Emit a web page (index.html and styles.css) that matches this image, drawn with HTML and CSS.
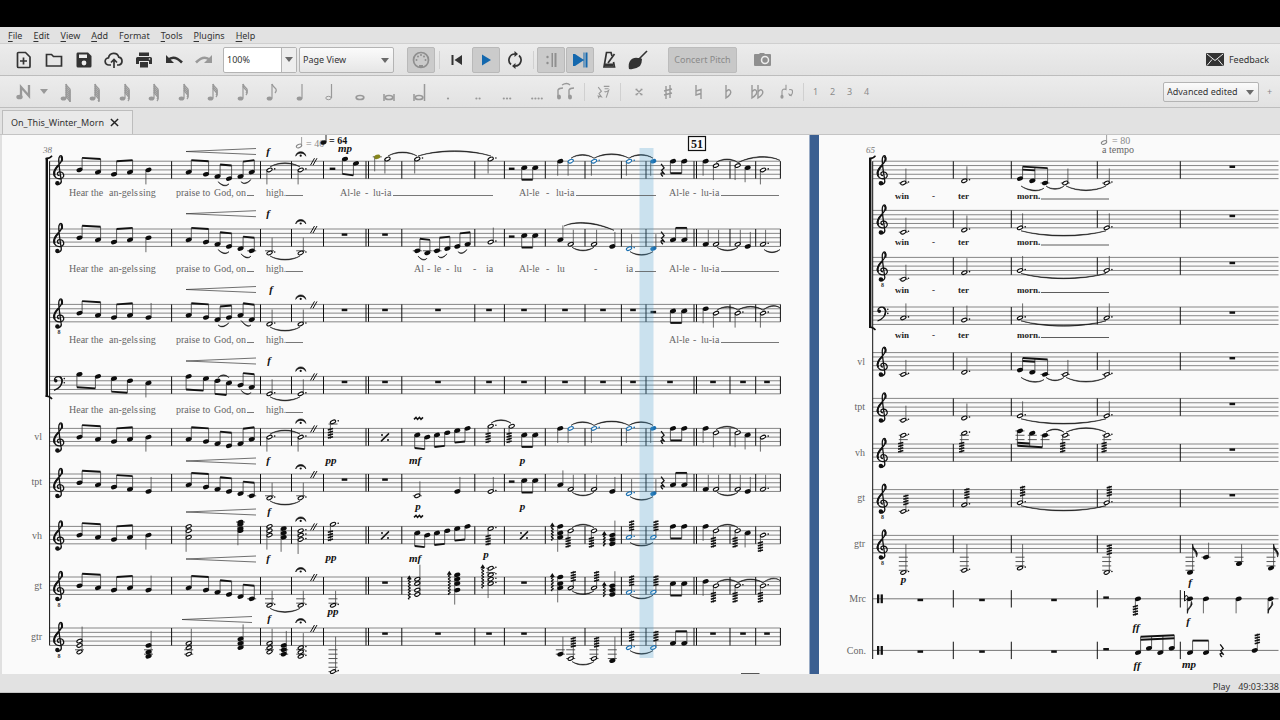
FILE: index.html
```html
<!DOCTYPE html>
<html lang="en">
<head>
<meta charset="utf-8">
<title>On_This_Winter_Morn</title>
<link rel="stylesheet" href="styles.css">
</head>
<body>
<div class="app">
<nav class="menubar">
  <button><u>F</u>ile</button><button><u>E</u>dit</button><button><u>V</u>iew</button><button><u>A</u>dd</button><button>F<u>o</u>rmat</button><button><u>T</u>ools</button><button><u>P</u>lugins</button><button><u>H</u>elp</button>
</nav>
<div class="toolbar">
  <span class="grip"></span>
  <div class="files">
    <button aria-label="New"><svg viewBox="0 0 20 20"><path d="M4.500 2.500h7l4.500 4.500v9.500q0 1-1 1h-10.500q-1 0-1-1v-13q0-1 1-1zM9.500 7.500v7M6 11h7" class="ln"/></svg></button>
    <button aria-label="Open"><svg viewBox="0 0 20 20"><path d="M2.500 16V4.500h5l2 2h8V16z" class="ln"/></svg></button>
    <button aria-label="Save"><svg viewBox="0 0 20 20"><path d="M3.500 2.500h10.500l3.500 3.500v10q0 1.500-1.500 1.500h-12q-1.500 0-1.500-1.500v-12q0-1.500 1-1.500z"/><path d="M5 4.500h8v3.500H5z" fill="#eee"/><circle cx="10" cy="13" r="2.400" fill="#eee"/></svg></button>
    <button aria-label="Save online"><svg viewBox="0 0 20 20"><path d="M7 15H5a3.600 3.600 0 0 1-.500-7.200 5.300 5.300 0 0 1 10.300-.600A4 4 0 0 1 15 15h-2M10 18v-8M7 12.500l3-3 3 3" class="ln"/></svg></button>
    <button aria-label="Print"><svg viewBox="0 0 20 20"><path d="M5 2.500h10v3.500H5zM3.500 7h13q1.500 0 1.500 1.500v5.500h-3v-3H5v3H2V8.500Q2 7 3.500 7zM6 12h8v5.500H6z"/><circle cx="15.500" cy="9" r=".8" fill="#eee"/></svg></button>
    <button aria-label="Undo"><svg viewBox="0 0 20 20"><path d="M4 10q6-5.500 14 2.500" class="ln thick"/><path d="M2 5v8h8z"/></svg></button>
    <button aria-label="Redo" class="off"><svg viewBox="0 0 20 20"><path d="M16 10q-6-5.500-14 2.500" class="ln thick"/><path d="M18 5v8h-8z"/></svg></button>
  </div>
  <div class="zoombox"><input type="text" value="100%" aria-label="Zoom"><button aria-label="Zoom levels"><i class="caret"></i></button></div>
  <div class="combo view"><select aria-label="View mode"><option>Page View</option></select><i class="caret"></i></div>
  <span class="grip mid"></span>
  <button class="tool on off" aria-label="MIDI input"><svg viewBox="0 0 20 20"><circle cx="10" cy="10" r="7.500" class="ln"/><path d="M8 17v-2h4v2z"/><circle cx="5.500" cy="10" r="1"/><circle cx="14.500" cy="10" r="1"/><circle cx="7" cy="6.500" r="1"/><circle cx="13" cy="6.500" r="1"/><circle cx="10" cy="5" r="1"/></svg></button>
  <span class="sep"></span>
  <button class="tool" aria-label="Rewind"><svg viewBox="0 0 20 20"><path d="M4.500 5h2v10h-2zM15 5v10l-7.500-5z"/></svg></button>
  <button class="tool on blue" aria-label="Play"><svg viewBox="0 0 20 20"><path d="M6 4.500v11l9-5.500z"/></svg></button>
  <button class="tool" aria-label="Loop"><svg viewBox="0 0 20 20"><path d="M6 14.500A6 6 0 0 1 10 4M14 5.500a6 6 0 0 1-4 10.500" class="ln"/><path d="M9.500 1v6l3.500-3zM10.500 13v6L7 16z"/></svg></button>
  <span class="sep"></span>
  <button class="tool on off" aria-label="Play repeats"><svg viewBox="0 0 20 20"><path d="M10.500 3h1.500v14h-1.500zM13.500 3h2v14h-2z"/><circle cx="6.500" cy="7" r="1.200"/><circle cx="6.500" cy="13" r="1.200"/></svg></button>
  <button class="tool on blue" aria-label="Pan score"><svg viewBox="0 0 20 20"><path d="M3 4h2v12H3zM13.500 2.500h1v15h-1zM15.500 2.500h2v15h-2zM5 4l9 6-9 6z"/></svg></button>
  <button class="tool" aria-label="Metronome"><svg viewBox="0 0 20 20"><path d="M13 6l-1-3.500H7.500L5 17h10.500l-1-5" class="ln"/><path d="M5.500 13.500h9v3h-9z"/><path d="M9 13l6.500-9" class="ln"/></svg></button>
  <button class="tool" aria-label="Image capture"><svg viewBox="0 0 20 20"><path d="M1 19q-1-5 1-8 3-4 8-3 3-.500 4 1 0 4-2 7Q7 20 1 19z"/><path d="M9 11L19 1" stroke="currentColor" stroke-width="1.600"/></svg></button>
  <span class="grip"></span>
  <button class="pitch">Concert Pitch</button>
  <span class="grip"></span>
  <button class="tool off" aria-label="Screenshot"><svg viewBox="0 0 20 20"><path d="M2 4h4l1-1h4l1 1h5q1 0 1 1v10q0 1-1 1H2q-1 0-1-1V5q0-1 1-1z"/><circle cx="12" cy="10" r="3.500" fill="none" stroke="#eee" stroke-width="1.500"/></svg></button>
  <button class="feedback"><svg viewBox="0 0 20 14"><rect x="1" y="0" width="18" height="13" rx="1"/><path d="M2 1l8 6.500L18 1M2 12.500l5-6M18 12.500l-5-6" fill="none" stroke="#eee"/></svg>Feedback</button>
</div>
<div class="toolbar">
  <span class="grip"></span>
  <button class="entry" aria-label="Note input"><svg viewBox="0 0 20 20"><ellipse cx="4.500" cy="15" rx="3.200" ry="2.300"/><path d="M6 15V5l8 9V3" fill="none" stroke="currentColor" stroke-width="2.300"/></svg></button>
  <button class="drop" aria-label="Input modes"><i class="caret"></i></button>
  <div class="durations" id="durations"></div>
  <span class="sep"></span>
  <button class="rest" aria-label="Rest"><svg viewBox="0 0 20 20"><path d="M4 4l4 5-3 3 3 4-4-1 1 3M11 3h7M12 6h5M12 9q1 2 5-1l-3 9" class="ln"/></svg></button>
  <span class="sep"></span>
  <div class="accidentals" id="accidentals"></div>
  <button class="flip" aria-label="Flip"><svg viewBox="0 0 20 20"><ellipse cx="5" cy="16" rx="2" ry="2.500"/><path d="M5 16V9q1-4 5-2V1M10 7V2M14 7q5-1 4 4-1 4-4 3M13 12l4 3" class="ln"/></svg></button>
  <span class="sep"></span>
  <div class="voices"><button>1</button><button>2</button><button>3</button><button>4</button></div>
  <span class="grip"></span>
  <div class="combo workspace"><select aria-label="Workspace"><option>Advanced edited</option></select><i class="caret"></i></div>
  <button class="plus" aria-label="New workspace">+</button>
</div>
<div class="tabs"><div class="tab">On_This_Winter_Morn<button aria-label="Close"><svg viewBox="0 0 10 10"><path d="M1 1l8 8M9 1L1 9" stroke="#222" stroke-width="1.600"/></svg></button></div></div>
<main class="viewer"><svg id="score" class="score" width="1280" height="539" viewBox="0 135 1280 539" role="img" aria-label="Score of On This Winter Morn"></svg></main>
<footer class="status"><span>Play</span><span>49:03:338</span></footer>
</div>
<script src="score.js"></script>
</body>
</html>
```
FILE: styles.css
```css
* { box-sizing: border-box; }
body {
  margin: 0;
  background: #000;
  font: 9px "Noto Sans", "Open Sans", sans-serif;
  color: #333;
}
.app {
  height: 100vh;
  padding: 27px 0;
  display: flex;
  flex-direction: column;
  overflow: hidden;
}
button {
  border: 0;
  padding: 0;
  background: none;
  font: inherit;
  color: inherit;
  flex: none;
  display: flex;
  align-items: center;
  justify-content: center;
}
svg { fill: currentColor; }
.ln { fill: none; stroke: currentColor; stroke-width: 1.7; }
.thick { stroke-width: 2.6; }
.menubar {
  display: flex;
  gap: 11px;
  padding-left: 8px;
  height: 17px;
  background: #e2e2e2;
  border-bottom: 1px solid #cfcfcf;
  flex: none;
}
.menubar button { display: block; line-height: 18px; }
u { text-underline-offset: 2px; }
.toolbar {
  display: flex;
  align-items: center;
  height: 32px;
  flex: none;
  background: linear-gradient(#ececec, #e2e2e2);
  border-bottom: 1px solid #bdbdbd;
  overflow: hidden;
}
.toolbar svg { width: 20px; height: 20px; }
.grip {
  width: 3px;
  height: 14px;
  margin: 0 3px;
  flex: none;
  background: radial-gradient(circle, #bbb 30%, transparent 50%) 0 0 / 2px 2px;
}
.grip.mid { margin: 0 3px 0 7px; }
.sep { width: 1px; height: 18px; margin: 0 3px; background: #d0d0d0; flex: none; }
.files { display: flex; margin-right: 4px; }
.files button { width: 30px; }
.off { color: #999; }
.zoombox {
  display: flex;
  width: 74px;
  height: 26px;
  margin-right: 2px;
  border: 1px solid #b4b4b4;
  border-radius: 2px;
  background: #fff;
  flex: none;
}
.zoombox input {
  flex: 1;
  min-width: 0;
  border: 0;
  padding: 0 3px;
  background: none;
  font: inherit;
  color: inherit;
}
.zoombox button { width: 15px; background: #eee; border-left: 1px solid #b4b4b4; }
.caret {
  border: 4px solid transparent;
  border-top: 5px solid #6a6a6a;
  border-bottom: 0;
}
.combo { position: relative; flex: none; }
.combo select {
  appearance: none;
  width: 100%;
  height: 100%;
  border: 1px solid #b4b4b4;
  border-radius: 2px;
  padding: 0 3px;
  background: linear-gradient(#fbfbfb, #e6e6e6);
  font: inherit;
  color: inherit;
}
.combo .caret { position: absolute; right: 5px; top: 50%; margin-top: -2px; }
.view { width: 95px; height: 26px; }
.tool { width: 28px; height: 26px; margin: 0 1px 0 0; border-radius: 2px; }
.tool.on { background: #cbcbcb; border: 1px solid #b9b9b9; }
.off.tool { color: #8f8f8f; }
.tool.blue { color: #1468ae; }
.pitch {
  width: 69px;
  height: 26px;
  margin: 0 3px 0 6px;
  border-radius: 2px;
  background: #c8c8c8;
  border: 1px solid #bcbcbc;
  color: #8a8a8a;
}
.feedback { margin: 0 11px 0 auto; gap: 4px; }
.feedback svg { height: 14px; }
.entry { width: 24px; color: #999; margin-left: 4px; }
.drop { width: 13px; }
.drop .caret { border-top-color: #999; }
.durations {
  display: grid;
  grid-template-columns: repeat(18, 1fr);
  width: 531px;
  flex: none;
  color: #999;
}
.accidentals {
  display: grid;
  grid-template-columns: repeat(5, 1fr);
  width: 148px;
  flex: none;
  color: #999;
}
.rest { width: 29px; color: #999; }
.rest svg, .flip svg { width: 16px; }
.rest .ln, .flip .ln, .accidentals .ln { stroke-width: 1.4; }
.flip { width: 28px; color: #999; }
.voices { display: flex; color: #8c8c8c; }
.voices button { width: 17px; }
.workspace { width: 96px; height: 20px; margin-left: auto; }
.plus { width: 21px; color: #888; }
.tabs { display: flex; height: 26px; padding: 2px 0 0 2px; background: #e2e2e2; flex: none; }
.tab {
  display: flex;
  align-items: center;
  gap: 6px;
  width: 131px;
  padding-left: 8px;
  border: 1px solid #bdbdbd;
  border-bottom: 0;
  background: #e9e9e9;
}
.tab svg { width: 9px; height: 9px; display: block; }
.viewer {
  flex: 1;
  min-height: 0;
  overflow: hidden;
  background: #fafafa;
  border-top: 1px solid #c4c4c4;
}
.score { display: block; font-family: "Liberation Serif", serif; }
.lyric, .tag { font-size: 10px; fill: #666; }
.tag { text-anchor: end; }
.strong { fill: #222; font-weight: bold; font-size: 9px; }
.dyn { font-size: 11px; font-weight: bold; font-style: italic; text-anchor: middle; fill: #111; }
.bar { font-size: 9px; font-style: italic; fill: #777; }
.tempo { font-size: 10px; fill: #888; }
.mark { font-size: 10px; font-weight: bold; fill: #111; }
.boxed { font-size: 12px; }
.small { font-size: 6px; font-weight: bold; text-anchor: middle; }
.status {
  display: flex;
  justify-content: flex-end;
  gap: 8px;
  height: 19px;
  line-height: 25px;
  padding-right: 1px;
  background: #e2e2e2;
  border-bottom: 1px solid #c4c4c4;
  flex: none;
}
```
FILE: score.js
```js
const HALF = 2.18;
const BLUE = '#1a6fb0';
const out = [];
const f = n => Math.round(n * 100) / 100;
const line = (x1, y1, x2, y2, w = 0.7, c = '#111') =>
  out.push(`<line x1="${f(x1)}" y1="${f(y1)}" x2="${f(x2)}" y2="${f(y2)}" stroke="${c}" stroke-width="${w}"/>`);
const path = (d, w = 1, c = '#111', fill = 'none') =>
  out.push(`<path d="${d}" fill="${fill}" stroke="${c}" stroke-width="${w}"/>`);
const rect = (x, y, w, h, c = '#111') => out.push(`<rect x="${f(x)}" y="${f(y)}" width="${f(w)}" height="${f(h)}" fill="${c}"/>`);
const dot = (x, y, r = 0.8, c = '#111') => out.push(`<circle cx="${f(x)}" cy="${f(y)}" r="${r}" fill="${c}"/>`);
const text = (x, y, s, cls) => out.push(`<text x="${x}" y="${y}" class="${cls}">${s}</text>`);

function head(x, y, open, c) {
  out.push(open
    ? `<ellipse cx="${x}" cy="${f(y)}" rx="2.8" ry="1.6" fill="#fafafa" stroke="${c}" stroke-width="1.100" transform="rotate(-24 ${x} ${f(y)})"/>`
    : `<ellipse cx="${x}" cy="${f(y)}" rx="3.1" ry="2.1" fill="${c}" transform="rotate(-20 ${x} ${f(y)})"/>`);
}
function ledgers(x, ps, top) {
  for (let p = 10; p <= Math.max(...ps); p += 2) line(x - 4.5, top + p * HALF, x + 4.5, top + p * HALF, 0.7);
  for (let p = -2; p >= Math.min(...ps); p -= 2) line(x - 4.5, top + p * HALF, x + 4.5, top + p * HALF, 0.7);
}
function note(kind, top, [xs, pstr, dir, flags = '']) {
  const x = +xs, ps = pstr.split(',').map(Number), ys = ps.map(p => top + p * HALF);
  const c = flags.includes('B') ? BLUE : flags.includes('O') ? '#85851c' : '#0c0c0c';
  const trem = flags.includes('t'), len = trem ? 17 : 14.5, mid = top + 4 * HALF;
  const hi = Math.min(...ys), lo = Math.max(...ys);
  ledgers(x, ps, top);
  const up = dir === 'u', sx = up ? x + 2.6 : x - 2.6;
  const single = flags.includes('1');
  const end = up ? (single ? hi - len : Math.min(hi - len, mid)) : (single ? lo + len : Math.max(lo + len, mid));
  line(sx, up ? lo : hi, sx, end, 0.8, '#444');
  ys.forEach(y => {
    head(x, y, kind === 'h' || kind === 'H', c);
    if (kind === 'H') dot(x + 5.2, y - 1, 0.8, c);
  });
  if (trem) for (let i = 0; i < 4; i++) {
    const y = up ? end + 1.5 + i * 2.7 : end - 1.5 - i * 2.7;
    path(`M${f(sx - 2.6)} ${f(y + 0.7)}L${f(sx + 2.6)} ${f(y - 0.7)}`, 1.6);
  }
  if (flags.includes('a')) {
    let d = `M${x - 8} ${f(hi - 1)}`;
    for (let y = hi - 1; y < lo + 2; y += 3) d += 'q2 .75 0 1.500q-2 .75 0 1.500';
    path(d, 1.1);
    path(`M${x - 10.5} ${f(hi)}l2.500-4 2.500 4z`, 0, 'none', '#111');
  }
  if (kind === 'e') up
    ? path(`M${sx} ${f(end)}q0 3 3 6t1 7q0-5-4-8z`, 0.6, '#111', '#111')
    : path(`M${sx} ${f(end)}q0-3 3-6t1-6q0 5-4 8z`, 0.6, '#111', '#111');
}
function beam(top, args) {
  const up = args[0] === 'u', levels = +args[1];
  const ns = args.slice(2).map(s => s.split(':').map(Number));
  const pts = ns.map(([x, p]) => ({ x, p, sx: up ? x + 2.6 : x - 2.6, y: top + p * HALF }));
  const a = pts[0], z = pts[pts.length - 1], sign = up ? -1 : 1;
  const d = Math.max(-1.5, Math.min(1.5, (z.y - a.y) * 0.5));
  const t = q => (q.sx - a.sx) / (z.sx - a.sx) * d;
  const base = up ? Math.min(...pts.map(q => q.y - 12 - t(q))) : Math.max(...pts.map(q => q.y + 12 - t(q)));
  for (const q of pts) {
    ledgers(q.x, [q.p], top);
    line(q.sx, q.y, q.sx, base + t(q), 0.8, '#333');
    head(q.x, q.y, false, '#0c0c0c');
  }
  for (let l = 0; l < levels; l++) {
    const o = -sign * l * 3, last = l && pts.length === 3 ? pts[1] : z;
    path(`M${a.sx} ${f(base + o)}L${last.sx} ${f(base + t(last) + o)}`, 1.9);
  }
}
function slur(top, [x1, p1, x2, p2, dir]) {
  const s = dir === 'u' ? -1 : 1, a = +x1, b = +x2;
  const y1 = top + p1 * HALF + s * 3, y2 = top + p2 * HALF + s * 3;
  const h = s * Math.min(7, 3 + (b - a) * 0.08), q = (b - a) * 0.28;
  path(`M${a} ${f(y1)}C${f(a + q)} ${f(y1 + h)} ${f(b - q)} ${f(y2 + h)} ${b} ${f(y2)}C${f(b - q)} ${f(y2 + h - s)} ${f(a + q)} ${f(y1 + h - s)} ${a} ${f(y1)}z`, 0.5, '#111', '#111');
}
function quarterRest(x, y) {
  path(`M${x - 1.5} ${f(y - 6)}l3 4-2.500 2.500 3 4M${x + 2} ${f(y + 4)}q-4-2-3.500 0t2 2.500`, 1.3);
}
function play(top, src) {
  for (const item of src.split(';')) {
    const a = item.trim().split(/\s+/), k = a.shift(), x = +a[0];
    if ('qhHe'.includes(k) && k) note(k, top, a);
    else if (k === 'b') beam(top, a);
    else if (k === 's') slur(top, a);
    else if (k === 'w') a.forEach(v => rect(v - 2.8, top + 4.4, 5.6, 2.4));
    else if (k === 'R') rect(x - 2.8, top + 6.4, 5.6, 2.4);
    else if (k === 'z') quarterRest(x, top + 8.7);
    else if (k === '%') {
      path(`M${x - 4} ${top + 13}L${x + 4} ${top + 5}`, 1.5);
      dot(x - 3, top + 6.5, 1); dot(x + 3, top + 11.5, 1);
    } else if (k === 'm') path(`M${x - 4} ${top - 9}l2-2 1.500 2 2-2 1.500 2 2-2`, 1.5);
  }
}
function treble(x, top, octave) {
  const y = top + 13;
  out.push(`<g transform="translate(${x} ${f(y)})" fill="none" stroke="#111" stroke-width="1.300"><path d="M.5 1.500C-2 1.500-2.500-1.800 0-2.300C3.500-3 5.300 0 4.600 2.200C3.800 4.600-.5 5.300-3 3.500C-6.500.8-5.500-4-2-7.500C1-10.500 3.600-13 3.200-16.500C3-19 1.200-19.500 0-16.500C-1-13.500 .3-7 2.200 6C3 9.500-1 11.500-2.500 9"/><path d="M-4.300 1.500C-6-2-3.500-6 0-9.500M2.800-13C3.300-15 3-17 2-18" stroke-width="2"/><circle cx="-1.600" cy="9" r="1.600" fill="#111"/></g>`);
  if (octave) text(x, f(top + 29.500), '8', 'small');
}
function bass(x, t) {
  dot(x - 3.2, t + 4.3, 1.7);
  path(`M${x - 4.6} ${t + 4}C${x - 4.5} ${t - 1} ${x + 3.5} ${t - 1.5} ${x + 3.2} ${t + 4.5}C${x + 3} ${t + 9.5} ${x - 1} ${t + 12.5} ${x - 5} ${t + 14}`, 1.3);
  path(`M${x + 1} ${t + .5}q3.500 3 1 8`, 1.4);
  dot(x + 5.3, t + 2.2); dot(x + 5.3, t + 6.4);
}
function staff(x1, x2, top, bars) {
  for (let i = 0; i < 5; i++) line(x1, top + i * 2 * HALF, x2, top + i * 2 * HALF, 0.7, '#555');
  bars.forEach(b => line(b, top, b, top + 8 * HALF, 1));
}
function bracket(x, y1, y2) {
  rect(x, y1, 2.4, y2 - y1);
  path(`M${x} ${y1 + 1}q4 0 6.500-3M${x} ${y2 - 1}q4 0 6.500 3`, 1.4);
}
function hairpin(x, y) { line(x, y, x + 70, y - 3, 0.7, '#333'); line(x, y, x + 70, y + 3, 0.7, '#333'); }

/* ---- page 1 ---- */
rect(0, 134, 2, 541, '#e0e0e0');
const bars1 = [171.6, 260.5, 291.5, 323.5, 366, 368.5, 401.8, 474.8, 504.4, 545.3, 585, 621.4, 646, 694, 696.5, 730, 755.7, 780.4];
const openA = 'b u 1 79.5:4 98:5;b u 1 114:6 130:5;';
const melody = 'b u 1 188.7:5 206:6;b u 1 217.5:7 229:8;';
const down6 = 'b u 1 240.5:9 251.7:10;';
const low = 'H 269.5 11 u;H 300.7 11 u;s 270 11 300 11 d;';
const run = 'b d 1 417.3:3 427.3:4;b d 1 437:3 447.3:2;b d 1 457.3:1 467.6:0;m 418;';
const high = 'q 560.3 0 d;h 570.7 0 d B;H 594 0 d B;H 629 0 d B;q 653.3 0 d B;z 662.6;b d 1 673:0 684.3:0;q 705.7 0 d;h 716 2 d;h 737.7 2 d;q 747.7 3 d;H 763 4 d;s 571 0 594 0 u;s 594 0 629 0 u;s 629 0 653 0 u;s 716 2 738 2 u;';
const alto = 'q 560.3 5 u;h 570.7 7 u;h 594 7 u;q 612.3 8 u;H 629 9 u B;q 653.3 9 u B;z 662.6;b u 1 673:5 684.3:5;q 705.7 7 u;h 716 7 u;h 737.7 7 u;q 747.7 8 u;H 763 7 u;s 572 7 594 7 d;s 630 9 653 9 d;s 717 7 738 7 d;';
const p1 = [
  [161.2, '', openA + 'q 148.5 4 d;' + melody + 'b u 1 240.5:7 251.7:5;s 218 8 229 9 d;s 241 8 251 7 d;H 269.5 4 d;H 300.7 4 d;s 270 4 300 4 u;R 332.5;b d 1 345:-1 356:1;q 377.3 -2 d O;h 387.5 -1 d;H 417.3 -1 d;H 490.7 -1 d;s 388 -1 417 -1 u;s 418 -1 491 -1 u;R 511.7;b d 1 524.3:3 535.3:3;' + high + 's 738 2 780 1 u'],
  [229, '', openA + 'q 148.5 4 d;' + melody + down6 + 's 218 8 229 9 d;s 241 10 251 11 d;' + low + 'w 344.500 385;b u 1 417.3:10 427.3:11;b u 1 437:10 447.3:9;b u 1 457.3:8 467.6:7;s 418 11 427 12 d;s 438 11 447 10 d;s 458 9 467 8 d;H 490.7 6 u;R 511.7;b d 1 524.3:3 535.3:3;' + alto + 's 564 0 614 2 u;s 764 8 780 8 d'],
  [304.4, '8', openA + 'q 148.5 6 u;b u 1 188.7:5 206:6;b u 1 217.5:7 229:6;b u 1 240.5:5 251.7:7;s 218 8 229 7 d;s 241 6 251 8 d;H 269.5 9 u;H 300.7 9 u;s 270 9 300 9 d;w 344.5 385 438 489 524 565 603 633;R 653.3;b d 1 673:3 684.3:3;q 705.7 2 d;h 716 4 d;H 737.7 4 d;H 763 4 d;s 717 4 738 4 u;s 738 4 763 4 u;s 763 4 780 3 u'],
  [376.4, 'F', 'b d 1 79.5:-1 98:0;b d 1 114:1 130:2;q 148.5 3 d;b d 1 188.7:0 206:1;b d 1 217.5:2 229:3;b u 1 240.5:4 251.7:5;s 218 2 229 2 u;s 241 5 251 6 d;H 269.5 8 u;H 300.7 8 u;s 270 8 300 8 d;w 344.5 385 438 489 524 565 603 633 670 713 743 767'],
  [428.4, '', openA + 'q 148.5 4 d;' + melody + 'b u 1 240.5:7 251.7:5;H 269.5 4 d;H 300.7 4 d;s 270 4 300 4 u;H 333 -3 d t;% 385;' + run + 'H 490.7 -1 d t;h 511.7 -1 d t;s 491 -1 511 -1 u;b d 1 524.3:3 535.3:3;' + high],
  [474, '', openA.replace('114:6 130:5', '114:6 130:7') + 'q 148.5 8 u;' + melody + down6 + low + 'w 344.5 385;h 417.3 10 u;q 457.3 8 u;H 490.7 8 u;R 511.7;b d 1 524.3:3 535.3:3;' + alto],
  [526.4, '', openA + 'q 148.5 4 d;h 188.7 0,2,5 d;q 240.5 -2,-1,1,2 d;h 269.5 0,2,4 d;q 283.7 1,3,5 d;H 300.7 2,4,6 d;H 333 -1 d t;% 385;' + run + 'H 490.7 1 d t;% 524;q 560.3 0,3,5 d a;h 570.7 2 d t;h 594 2 d t;q 612.3 4,6,8 u a;H 629 5 u Bt;h 653.3 5 u Bt;b d 1 673:0 684.3:0;q 705.7 0 d;h 716 2 d t;h 737.7 2 d t;q 747.7 3 d;H 763 4 d t;s 572 2 594 2 u;s 630 6 653 6 d;s 717 2 738 2 u'],
  [577, '8', openA + 'q 148.5 6 u;' + melody + down6 + 'H 269.5 13 u 1;H 300.7 13 u 1;s 270 13 300 13 d;H 333 13 u 1;w 385;h 417.3 1,3,6,8 u a;q 457.3 -1,1,3,6 d a;H 490.7 -4,-1,1,3 d a;w 524;q 560.3 0,3,5 d a;h 570.7 5 u t;h 594 5 u t;q 612.3 4,6,8 u a;H 629 7 u Bt;h 653.3 7 u Bt;b d 1 673:3 684.3:3;q 705.7 2 d;h 716 4 d t;H 737.7 4 d t;H 763 4 d t;s 572 5 594 5 d;s 630 7 653 7 d;s 717 4 738 4 u;s 738 4 763 4 u;s 763 4 780 3 u'],
  [628, '8', 'h 79.5 6,8,11 u;q 148.5 8,11,13 u;h 188.7 7,9,12 u;q 240.5 5,7,9 u;h 269.5 7,9,11 u;q 283.7 8,10,12 u;H 300.7 9,11,13 u;H 333 20 u;w 385 438 489 524;q 560.3 12 u;h 570.7 14 u t;h 594 14 u t;q 612.3 15 u;H 629 9 u Bt;h 653.3 9 u Bt;b u 1 673:7 684.3:7;w 713 743 767;s 572 14 594 14 d;s 630 9 653 9 d'],
];
for (const [top, clef, src] of p1) {
  staff(49.6, 780.4, top, bars1);
  clef === 'F' ? bass(59, top) : treble(59, top, clef);
  play(top, src);
  path(`M295.700 ${f(top - 5)}C296 ${f(top - 11)} 305.500 ${f(top - 11)} 305.800 ${f(top - 5)}C304 ${f(top - 9)} 297.500 ${f(top - 9)} 295.700 ${f(top - 5)}z`, 0.6, '#111', '#111');
  dot(300.7, top - 5.5, 1.1);
  line(310.5, top + 4, 314.5, top - 3, 1); line(313, top + 4, 317, top - 3, 1);
}
line(49.6, 161.2, 49.6, 645.4, 1);
bracket(45.6, 157.7, 397);
[[186, 151.5], [186, 213.7], [186, 289.5], [186, 361], [186, 461], [186, 512], [186, 559], [182, 619.5]].forEach(h => hairpin(...h));

/* ---- page 2 ---- */
rect(809.5, 134, 9.5, 541, '#3b5f91');
const bars2 = [953.3, 1011.3, 1097.3, 1180.3];
const vocal = 'H 903.3 10 u 1;H 964.3 9 u 1;b u 2 1020:8 1032.3:9 1045:10;h 1065.3 10 u 1;H 1106.7 10 u 1;w 1232.3;s 1021 10 1044 11 d;s 1046 10 1064 10 d;s 1066 10 1106 10 d';
const hold = 'H 903.3 10 u 1;H 964.3 9 u 1;H 1020 8 u;H 1106.7 8 u;w 1232.3;s 1021 8 1106 8 d';
const p2 = [
  [161.2, '', vocal], [210.4, '', hold],
  [257.4, '8', 'H 903.3 10 u 1;H 964.3 7 u;H 1020 6 u;H 1106.7 6 u;w 1232.3;s 1021 6 1106 6 d'],
  [307, 'F', 'H 903.3 5 u;H 964.3 6 u;H 1020 5 u;H 1106.7 5 u;w 1232.3;s 1021 5 1106 5 d'],
  [352.6, '', vocal], [398.4, '', hold],
  [444, '', 'H 903.3 -4 d t;H 964.3 -5 d t;b d 2 1020:-6 1032.3:-5 1045:-4;h 1065.3 -4 d t;H 1106.7 -4 d t;w 1232.3;s 1046 -4 1064 -4 u;s 1066 -4 1106 -4 u'],
  [489.6, '8', 'H 903.3 10 u t1;H 964.3 7 u t;H 1020 6 u t;H 1106.7 6 u t;w 1232.3;s 1021 6 1106 6 d'],
  [535.4, '8', 'H 903.3 17 u;H 964.3 16 u;H 1020 15 u;H 1106.7 17 u t;e 1190 17 u;q 1206 10 u 1;q 1239 13 u;e 1271 15 u'],
];
for (const [top, clef, src] of p2) {
  staff(872.7, 1278.5, top, bars2);
  clef === 'F' ? bass(882.5, top) : treble(882.5, top, clef);
  play(top, src);
}
for (const y of [598.8, 650.4]) {
  line(872.7, y, 1278.5, y, 0.8, '#555');
  bars2.forEach(b => line(b, y - 8.7, b, y + 8.7, 1));
  rect(877, y - 4.4, 2.3, 8.8); rect(880.6, y - 4.4, 2.3, 8.8);
  [920.3, 982, 1054].forEach(x => rect(x - 2.8, y, 5.6, 2.4));
  rect(1103.3, y - 2.4, 5.6, 2.4);
}
play(590.1, 'q 1138 4 d t1;e 1190 4 d 1;q 1206 4 d 1;q 1238.7 4 d 1;e 1270.7 4 d 1');
path('M1184.500 591v10q5-3 3-5t-3 2', 1);
play(641.7, 'b u 2 1138:5 1149:3 1160.3:5 1171.7:3;b u 1 1190:5 1206:5;q 1254.7 4 u t1;z 1221.7');
line(872.7, 161.2, 872.7, 659, 1);
bracket(869, 157.7, 328);

/* ---- playback cursor ---- */
out.push('<rect x="639.500" y="148" width="14" height="510" fill="#4fa0d0" opacity=".28"/>');

/* ---- words ---- */
for (const y of [195.5, 271.5, 342.5, 412.5]) {
  [[69, 'Hear the'], [109, 'an-gels'], [139, 'sing'], [176, 'praise to'], [214, 'God,'], [236, 'on'], [266, 'high.']].forEach(([x, s]) => text(x, y, s, 'lyric'));
  line(247, y, 254, y, 0.8, '#555'); line(286, y, 303, y, 0.8, '#555');
}
[[195.5, 340, 'Al-le'], [195.5, 365, '-'], [195.5, 373, 'lu-ia'], [195.5, 519, 'Al-le'], [195.5, 546, '-'], [195.5, 556, 'lu-ia'],
 [271.5, 414, 'Al'], [271.5, 427, '-'], [271.5, 434, 'le'], [271.5, 446, '-'], [271.5, 454, 'lu'], [271.5, 473, '-'], [271.5, 486, 'ia'],
 [271.5, 519, 'Al-le'], [271.5, 546, '-'], [271.5, 557, 'lu'], [271.5, 594, '-'], [271.5, 626, 'ia']].forEach(([y, x, s]) => text(x, y, s, 'lyric'));
[195.5, 271.5, 342.5].forEach(y => { text(669, y, 'Al-le', 'lyric'); text(693, y, '-', 'lyric'); text(701, y, 'lu-ia', 'lyric'); line(721, y, 779, y, 0.8, '#555'); });
line(393, 195.5, 493, 195.5, 0.8, '#555'); line(576, 195.5, 656, 195.5, 0.8, '#555'); line(635, 271.5, 656, 271.5, 0.8, '#555');
[199, 245, 292.5, 337.5].forEach(y => {
  text(895, y, 'win', 'lyric strong'); text(932, y, '-', 'lyric strong'); text(958, y, 'ter', 'lyric strong'); text(1017, y, 'morn.', 'lyric strong');
  line(1041, y, 1109, y, 0.8, '#333');
});
[[42, 440, 'vl'], [42, 485, 'tpt'], [42, 538.5, 'vh'], [42, 588.5, 'gt'], [42, 639.5, 'gtr'],
 [865, 365, 'vl'], [865, 409.5, 'tpt'], [865, 456, 'vh'], [865, 501, 'gt'], [865, 547, 'gtr'], [866, 602, 'Mrc'], [866, 654, 'Con.']].forEach(([x, y, s]) => text(x, y, s, 'tag'));
[[268, 155, 'f'], [268, 217, 'f'], [271, 293, 'f'], [269, 364, 'f'], [268, 464, 'f'], [269, 515, 'f'], [268, 562, 'f'], [269, 622, 'f'],
 [345, 152, 'mp'], [331, 464, 'pp'], [331, 561, 'pp'], [333, 615, 'pp'], [415, 464, 'mf'], [418, 510, 'p'], [415, 562, 'mf'], [486, 558, 'p'], [522.5, 464, 'p'], [522.5, 510, 'p'],
 [903.5, 583, 'p'], [1190, 586, 'f'], [1136, 631, 'ff'], [1188, 625, 'f'], [1137, 669, 'ff'], [1189, 668, 'mp']].forEach(([x, y, s]) => text(x, y, s, 'dyn'));
text(43, 153, '38', 'bar'); text(866, 153, '65', 'bar');
head(299, 146, true, '#888'); line(301.6, 146, 301.6, 137, 0.8, '#888'); text(306, 147, '= 40', 'tempo');
head(323.5, 142.500, false, '#111'); line(326, 142, 326, 135, 0.9); text(329, 144, '= 64', 'mark');
head(1104, 142.500, true, '#888'); line(1106.6, 142, 1106.6, 135, 0.8, '#888'); text(1112, 144, '= 80', 'tempo'); text(1102, 153, 'a tempo', 'lyric');
out.push('<rect x="688.500" y="136.500" width="17" height="14" fill="none" stroke="#111" stroke-width="1.200"/>');
text(691, 148, '51', 'mark boxed');
rect(741, 673, 18.5, 1, '#555');
document.getElementById('score').innerHTML = out.join('');

/* ---- note input palette ---- */
const icon = (label, body) => `<button aria-label="${label}"><svg viewBox="0 0 20 20">${body}</svg></button>`;
const stem = '<ellipse cx="8.500" cy="16.500" rx="2.800" ry="2"/><path d="M11 16.500V2" fill="none" stroke="currentColor" stroke-width="1.200"/>';
const flags = n => Array.from({ length: n }, (_, i) => `<path d="M11 ${2 + i * 2}q.5 2 3 4t0 5" fill="none" stroke="currentColor" stroke-width="1.300"/>`).join('');
const ring = '<ellipse cx="10" cy="15.500" rx="3.800" ry="2" fill="none" stroke="currentColor" stroke-width="1.700"/>';
const keys = [7, 6, 5, 5, 4, 3, 2, 1].map(n => icon('Short note', stem + flags(n)));
keys.push(icon('Quarter', stem),
  icon('Half', '<ellipse cx="8.500" cy="16" rx="2.700" ry="1.700" fill="none" stroke="currentColor"/><path d="M11.500 16V2" stroke="currentColor" stroke-width="1.200"/>'),
  icon('Whole', ring), icon('Breve', ring + '<path d="M5 12v7M15 12v7" stroke="currentColor" stroke-width="1.500"/>'),
  icon('Longa', ring + '<path d="M5 12v7M15.500 2v17" stroke="currentColor" stroke-width="1.500"/>'));
for (let n = 1; n < 5; n++) keys.push(icon('Dots ' + n, Array.from({ length: n }, (_, i) => `<circle cx="${10 + (i - (n - 1) / 2) * 3.2}" cy="16.500" r="1.100"/>`).join('')));
keys.push(icon('Tie', '<ellipse cx="3" cy="15" rx="2" ry="2.500"/><ellipse cx="14" cy="15" rx="2" ry="2.500"/><path d="M2 15V8q1-2 5-2M13 15V8q1-2 5-2M6 3q5-3 8 0" fill="none" stroke="currentColor" stroke-width="1.400"/>'));
document.getElementById('durations').innerHTML = keys.join('');
const flat = x => `<path d="M${x} 3v13q6-4 4.500-7t-4.500 1" class="ln"/>`;
document.getElementById('accidentals').innerHTML = [
  icon('Double sharp', '<path d="M7 7l6 6M13 7l-6 6M6.500 7.500h2M11.500 7.500h2M6.500 12.500h2M11.500 12.500h2" class="ln"/>'),
  icon('Sharp', '<path d="M8 4v13M12 3v13M6 9l8-2M6 13l8-2" class="ln"/>'),
  icon('Natural', '<path d="M8 3v10l5-1.500M13 17V7.500L8 9" class="ln"/>'),
  icon('Flat', flat(8)), icon('Double flat', flat(5) + flat(11))].join('');
```
